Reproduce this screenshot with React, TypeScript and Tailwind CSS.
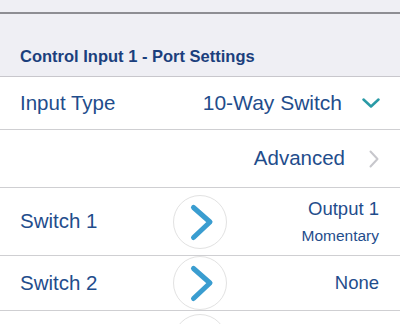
import React from 'react';

const font = { fontFamily: '"Liberation Sans", Arial, sans-serif' };

function CircleArrow() {
  return (
    <div className="w-[54px] h-[54px] shrink-0 rounded-full border border-[#e2e2e2] bg-white">
      <svg width="54" height="54" viewBox="0 0 54 54" className="-m-px">
        <path d="M20.5 12.5 L37 27 L20.5 42.5" fill="none" stroke="#3a9dd0" strokeWidth="5" strokeLinecap="round" strokeLinejoin="round" />
      </svg>
    </div>
  );
}

function SwitchRow({ label, value, mode, h }: { label?: string; value?: string; mode?: string; h: string }) {
  return (
    <div className={`flex items-center px-[20px] bg-white border-b border-[#cfcfd2] ${h}`}>
      <div className="flex-1 text-[20.5px] text-[#1f4d8c]">{label}</div>
      <CircleArrow />
      <div className="flex-1 flex flex-col items-end pr-px text-[#1f4d8c]">
        {value && <span className="text-[18.5px] leading-[24px]">{value}</span>}
        {mode && <span className="text-[15.5px] leading-[20px] mt-[5px]">{mode}</span>}
      </div>
    </div>
  );
}

export default function App() {
  return (
    <div className="w-[400px] h-[324px] overflow-hidden bg-[#efeff4]" style={font}>
      <div className="h-[14px] border-b-2 border-[#8e8e93]" />
      <div className="h-[63px] flex items-end pb-[7px] px-[20px] border-b border-[#c8c7cc]">
        <span className="text-[16.5px] font-bold text-[#1b3f7d]">Control Input 1 - Port Settings</span>
      </div>
      <div className="h-[53px] flex items-center bg-white border-b border-[#cfcfd2] pl-[20px] pr-[20px]">
        <span className="flex-1 text-[20.5px] text-[#1f4d8c]">Input Type</span>
        <span className="text-[21px] text-[#1f4d8c]">10-Way Switch</span>
        <svg width="18" height="10" viewBox="0 0 18 10" className="ml-[20px]">
          <path d="M1.5 1.5 L9 8.5 L16.5 1.5" fill="none" stroke="#2a9aa6" strokeWidth="2.5" strokeLinecap="round" strokeLinejoin="round" />
        </svg>
      </div>
      <div className="h-[58px] flex items-center justify-end bg-white border-b border-[#cfcfd2] pr-[21px]">
        <span className="text-[20.5px] text-[#1f4d8c]">Advanced</span>
        <svg width="10" height="18" viewBox="0 0 10 18" className="ml-[24px]">
          <path d="M1.5 1.5 L8.5 9 L1.5 16.5" fill="none" stroke="#c7c7cc" strokeWidth="2" strokeLinecap="round" strokeLinejoin="round" />
        </svg>
      </div>
      <SwitchRow label="Switch 1" value="Output 1" mode="Momentary" h="h-[68px]" />
      <SwitchRow label="Switch 2" value="None" h="h-[55px]" />
      <SwitchRow h="h-[60px]" />
    </div>
  );
}
